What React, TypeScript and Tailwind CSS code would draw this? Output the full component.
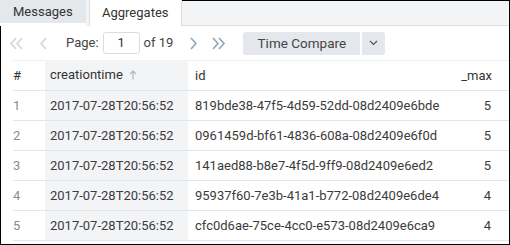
import { ReactNode } from "react";

type Row = { n: number; time: string; id: string; max: number };

const rows: Row[] = [
  { n: 1, time: "2017-07-28T20:56:52", id: "819bde38-47f5-4d59-52dd-08d2409e6bde", max: 5 },
  { n: 2, time: "2017-07-28T20:56:52", id: "0961459d-bf61-4836-608a-08d2409e6f0d", max: 5 },
  { n: 3, time: "2017-07-28T20:56:52", id: "141aed88-b8e7-4f5d-9ff9-08d2409e6ed2", max: 5 },
  { n: 4, time: "2017-07-28T20:56:52", id: "95937f60-7e3b-41a1-b772-08d2409e6de4", max: 4 },
  { n: 5, time: "2017-07-28T20:56:52", id: "cfc0d6ae-75ce-4cc0-e573-08d2409e6ca9", max: 4 },
];

function Chevron({ dir, double, color }: { dir: "left" | "right"; double?: boolean; color: string }) {
  const pts = (x: number) =>
    dir === "left" ? `${x + 5},1 ${x},6.5 ${x + 5},12` : `${x},1 ${x + 5},6.5 ${x},12`;
  return (
    <svg width={double ? 14 : 7} height="13" viewBox={double ? "0 0 14 13" : "0 0 7 13"} fill="none">
      <polyline points={pts(1)} stroke={color} strokeWidth="1.6" />
      {double && <polyline points={pts(7)} stroke={color} strokeWidth="1.6" />}
    </svg>
  );
}

function Cell({ children, className }: { children: ReactNode; className?: string }) {
  return <div className={`flex items-center ${className ?? ""}`}>{children}</div>;
}

export default function App() {
  return (
    <div
      className="w-[510px] h-[245px] bg-white text-[13px] text-[#3b3b3b] flex flex-col overflow-hidden"
      style={{ fontFamily: "Roboto, 'Liberation Sans', sans-serif" }}
    >
      {/* tabs */}
      <div className="flex h-[26px] shrink-0 border-r border-black">
        <div className="w-[86px] h-[23px] bg-[#e4e8eb] flex items-center pl-[13px] text-[#333]">Messages</div>
        <div className="w-[3px] bg-[#f3f4f6]" />
        <div className="w-[93px] h-[26px] bg-white border-x border-[#dcdfe3] flex items-center pl-[12px] text-[#333]">
          Aggregates
        </div>
        <div className="flex-1 bg-[#f3f4f6] border-t border-black border-b border-b-[#dcdfe3]" />
      </div>

      <div className="flex-1 flex flex-col border-l border-r border-b border-black">
        {/* pager */}
        <div className="h-[34px] shrink-0 flex items-center">
          <div className="ml-[9px]">
            <Chevron dir="left" double color="#cdd6df" />
          </div>
          <div className="ml-[16px]">
            <Chevron dir="left" color="#cdd6df" />
          </div>
          <span className="ml-[19px] text-[#444]">Page:</span>
          <div className="ml-[4px] w-[37px] h-[22px] border border-[#d9dde1] rounded-[3px] flex items-center justify-center text-[#333]">
            1
          </div>
          <span className="ml-[4px] text-[#444]">of 19</span>
          <div className="ml-[17px]">
            <Chevron dir="right" color="#8fa4b8" />
          </div>
          <div className="ml-[15px]">
            <Chevron dir="right" double color="#8fa4b8" />
          </div>
          <div className="ml-[17px] flex h-[23px]">
            <div className="w-[117px] bg-[#e4e8ec] rounded-l-[3px] flex items-center justify-center text-[#444] text-[13.5px]">
              Time Compare
            </div>
            <div className="w-[2px] bg-white" />
            <div className="w-[23px] bg-[#e4e8ec] rounded-r-[3px] flex items-center justify-center">
              <svg width="9" height="6" viewBox="0 0 9 6" fill="none">
                <polyline points="1,1 4.5,4.5 8,1" stroke="#555" strokeWidth="1.2" />
              </svg>
            </div>
          </div>
        </div>

        {/* table */}
        <div className="ml-[12px] flex-1 flex flex-col">
          <div className="grid grid-cols-[32px_143px_1fr_60px] h-[31px] border-b border-[#e3e6e9] text-[#333]">
            <Cell className="border-t border-[#eceef0]">#</Cell>
            <Cell className="bg-[#f3f4f6] pl-[5px] gap-[6px]">
              creationtime
              <svg width="8" height="10" viewBox="0 0 8 10" fill="none">
                <path d="M4 9.5V1M1 4l3-3 3 3" stroke="#a9b9c9" strokeWidth="1.2" />
              </svg>
            </Cell>
            <Cell className="pl-[7px] border-t border-[#eceef0]">id</Cell>
            <Cell className="justify-end pr-[17px] border-t border-[#eceef0]">_max</Cell>
          </div>
          {rows.map((r) => (
            <div key={r.n} className="grid grid-cols-[32px_143px_1fr_60px] h-[30px] border-b border-[#e3e6e9]">
              <Cell className="text-[#8c8c8c]">{r.n}</Cell>
              <Cell className="bg-[#f3f4f6] pl-[5px]">{r.time}</Cell>
              <Cell className="pl-[7px]">{r.id}</Cell>
              <Cell className="justify-end pr-[18px]">{r.max}</Cell>
            </div>
          ))}
        </div>
      </div>
    </div>
  );
}
